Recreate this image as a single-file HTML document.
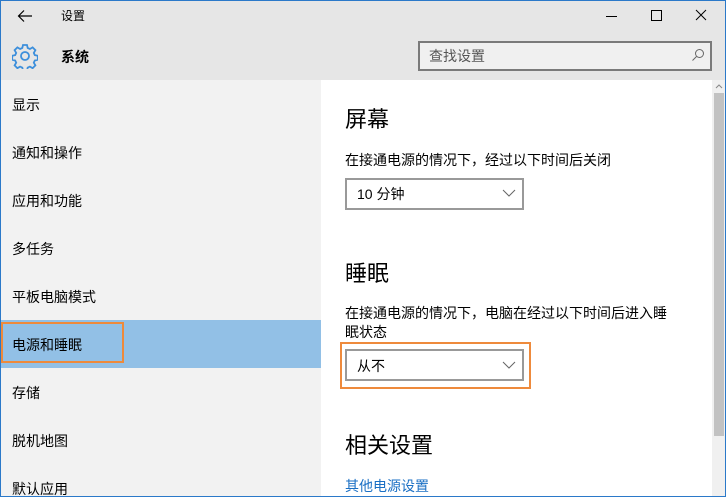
<!DOCTYPE html><html><head><meta charset="utf-8"><style>
*{margin:0;padding:0;box-sizing:border-box}
body{width:726px;height:497px;overflow:hidden;font-family:"Liberation Sans","Noto Sans CJK SC",sans-serif;background:#fff;position:relative}
.abs{position:absolute}
.frame{left:0;top:0;width:726px;height:497px;border:1px solid #2b79c9;pointer-events:none;z-index:10}
.hdr{left:0;top:0;width:726px;height:80px;background:#e6e6e6}
.side{left:0;top:80px;width:321px;height:417px;background:#f2f2f2}
.nav{left:12px;font-size:14px;color:#000}
.sel{left:0;top:320px;width:321px;height:48px;background:#92c0e6}
.ob{border:2px solid #ee8a3c}
.h{font-size:22px;color:#000;left:345px}
.t{font-size:14px;color:#000;left:345px}
.dd{border:2px solid #999;background:#fff;height:32px}
</style></head><body>
<div class="abs hdr"></div>
<svg class="abs" style="left:17px;top:9px" width="16" height="14"><path d="M15 7H2M7 1.5L1.5 7 7 12.5" stroke="#000" fill="none" stroke-width="1.2"/></svg>
<div class="abs" style="left:61px;top:7px;font-size:12px">设置</div>
<svg class="abs" style="left:600px;top:8px" width="110" height="16"><path d="M6 8.5H17" stroke="#000"/><rect x="51.5" y="2.5" width="10" height="10" fill="none" stroke="#000"/><path d="M96 2L106 12M106 2L96 12" stroke="#000"/></svg>
<svg class="abs" style="left:12px;top:43px" width="26" height="26" viewBox="0 0 26 26"><g fill="none" stroke="#3d8fdb" stroke-width="1.8"><path d="M11 2h4l.7 3 2.2 1 2.7-1.6 2.8 2.8-1.6 2.7 1 2.2 3 .7v4l-3 .7-1 2.2 1.6 2.7-2.8 2.8-2.7-1.6-2.2 1-.7 3h-4l-.7-3-2.2-1-2.7 1.6-2.8-2.8 1.6-2.7-1-2.2-3-.7v-4l3-.7 1-2.2-1.6-2.7 2.8-2.8 2.7 1.6 2.2-1z"/><circle cx="13" cy="13" r="4"/></g></svg>
<div class="abs" style="left:61px;top:47px;font-size:14px;font-weight:bold">系统</div>
<div class="abs" style="left:418px;top:41px;width:294px;height:30px;border:2px solid #7a7a7a;background:#f0f0f0"></div>
<div class="abs" style="left:429px;top:46px;font-size:14px;color:#555">查找设置</div>
<svg class="abs" style="left:691px;top:48px" width="14" height="14"><circle cx="8.5" cy="5.5" r="4" fill="none" stroke="#666"/><path d="M5.5 8.5L1.5 12.5" stroke="#666"/></svg>
<div class="abs side"></div>
<div class="abs sel"></div>
<div class="abs nav" style="top:95px">显示</div>
<div class="abs nav" style="top:143px">通知和操作</div>
<div class="abs nav" style="top:191px">应用和功能</div>
<div class="abs nav" style="top:239px">多任务</div>
<div class="abs nav" style="top:287px">平板电脑模式</div>
<div class="abs nav" style="top:335px">电源和睡眠</div>
<div class="abs nav" style="top:383px">存储</div>
<div class="abs nav" style="top:431px">脱机地图</div>
<div class="abs nav" style="top:479px">默认应用</div>
<div class="abs ob" style="left:1px;top:322px;width:123px;height:41px"></div>
<div class="abs h" style="top:102px">屏幕</div>
<div class="abs t" style="top:150px">在接通电源的情况下，经过以下时间后关闭</div>
<div class="abs dd" style="left:345px;top:178px;width:179px"></div>
<div class="abs" style="left:357px;top:184px;font-size:14px">10 分钟</div>
<svg class="abs" style="left:502px;top:188px" width="14" height="10"><path d="M1 2l6 6 6-6" fill="none" stroke="#666"/></svg>
<div class="abs h" style="top:256px">睡眠</div>
<div class="abs t" style="top:304px;width:340px;line-height:19px">在接通电源的情况下，电脑在经过以下时间后进入睡<br>眠状态</div>
<div class="abs ob" style="left:340px;top:342px;width:191px;height:47px"></div>
<div class="abs dd" style="left:345px;top:349px;width:179px"></div>
<div class="abs" style="left:357px;top:356px;font-size:14px">从不</div>
<svg class="abs" style="left:502px;top:360px" width="14" height="10"><path d="M1 2l6 6 6-6" fill="none" stroke="#666"/></svg>
<div class="abs h" style="top:428px">相关设置</div>
<div class="abs" style="left:345px;top:476px;font-size:14px;color:#1a6fc4">其他电源设置</div>
<div class="abs" style="left:712px;top:80px;width:14px;height:417px;background:#f0f0f0"></div>
<div class="abs" style="left:714px;top:93px;width:10px;height:343px;background:#c2c2c2"></div>
<svg class="abs" style="left:714px;top:82px" width="10" height="8"><path d="M2 6l3-3 3 3" fill="none" stroke="#888"/></svg>
<div class="abs frame"></div>
</body></html>
